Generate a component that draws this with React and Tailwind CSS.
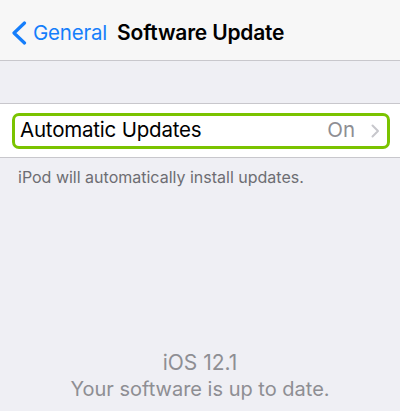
export default function App() {
  return (
    <div
      className="w-[400px] h-[411px] bg-[#efeff4] flex flex-col overflow-hidden"
      style={{ fontFamily: '"Inter", "Liberation Sans", sans-serif' }}
    >
      {/* Navigation bar */}
      <div className="h-[61px] bg-[#f7f7f7] border-b border-[#c8c7cc] flex items-center pl-[11px] pt-[6px] shrink-0">
        <svg width="16" height="24" viewBox="0 0 16 24" className="mr-[6px]">
          <path
            d="M13.5 2 L3 12 L13.5 22"
            fill="none"
            stroke="#157efb"
            strokeWidth="3.2"
            strokeLinecap="round"
            strokeLinejoin="round"
          />
        </svg>
        <span className="text-[20.5px] text-[#157efb] tracking-[-0.2px]">General</span>
        <span className="ml-[10px] text-[21px] font-semibold text-black tracking-[-0.2px]">
          Software Update
        </span>
      </div>

      {/* Spacer */}
      <div className="h-[42px] shrink-0" />

      {/* Settings group */}
      <div className="bg-white border-y border-[#c8c7cc] h-[55px] flex items-center pl-[12px] pr-[10px] shrink-0">
        <div className="flex-1 h-[36px] border-[3px] border-[#7ac300] rounded-[7px] flex items-center pl-[5px] pr-[7px]">
          <span className="flex-1 text-[20.5px] text-black tracking-[-0.2px]">Automatic Updates</span>
          <span className="text-[20.5px] text-[#8e8e93] mr-[16px]">On</span>
          <svg width="9" height="14" viewBox="0 0 9 14">
            <path
              d="M1.5 1.5 L7 7 L1.5 12.5"
              fill="none"
              stroke="#c7c7cc"
              strokeWidth="2"
              strokeLinecap="round"
              strokeLinejoin="round"
            />
          </svg>
        </div>
      </div>

      {/* Footer note */}
      <div className="pl-[18px] pt-[7px] text-[16px] text-[#6d6d72]">
        iPod will automatically install updates.
      </div>

      {/* Status */}
      <div className="mt-auto pb-[8px] flex flex-col items-center text-[#8e8e93]">
        <span className="text-[21px] leading-[27px]">iOS 12.1</span>
        <span className="text-[20px] leading-[27px]">Your software is up to date.</span>
      </div>
    </div>
  );
}
